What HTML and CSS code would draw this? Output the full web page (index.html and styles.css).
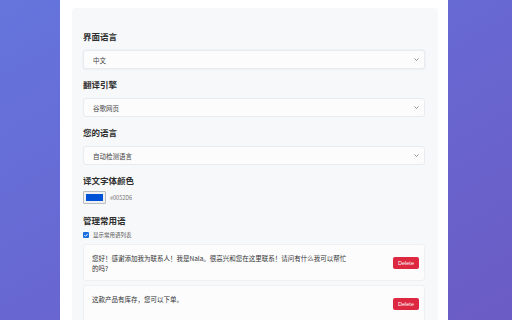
FILE: index.html
```html
<!DOCTYPE html>
<html lang="zh-CN">
<head>
    <meta charset="UTF-8">
    <meta name="viewport" content="width=device-width, initial-scale=1.0">
    <title>设置</title>
    <link rel="stylesheet" href="styles.css">
</head>
<body>
    <div class="page">
        <div class="panel">
            <!-- 界面语言 -->
            <label class="field-label">界面语言</label>
            <div class="select focus">
                <span>中文</span>
                <svg class="chevron" viewBox="0 0 10 6"><path d="M1 1l4 4 4-4" fill="none" stroke="#666" stroke-width="1.4"/></svg>
            </div>

            <label class="field-label">翻译引擎</label>
            <div class="select">
                <span>谷歌网页</span>
                <svg class="chevron" viewBox="0 0 10 6"><path d="M1 1l4 4 4-4" fill="none" stroke="#666" stroke-width="1.4"/></svg>
            </div>

            <label class="field-label">您的语言</label>
            <div class="select">
                <span>自动检测语言</span>
                <svg class="chevron" viewBox="0 0 10 6"><path d="M1 1l4 4 4-4" fill="none" stroke="#666" stroke-width="1.4"/></svg>
            </div>

            <!-- 颜色 -->
            <label class="field-label color-label">译文字体颜色</label>
            <div class="color-row">
                <div class="swatch"><div class="swatch-fill"></div></div>
                <span class="color-code">#0052D6</span>
            </div>

            <!-- 常用语 -->
            <label class="field-label phrase-label">管理常用语</label>
            <div class="check-row">
                <span class="checkbox">
                    <svg viewBox="0 0 10 10"><path d="M2.2 5.2l1.9 1.9 3.8-4" fill="none" stroke="#fff" stroke-width="1.6"/></svg>
                </span>
                <span>显示常用语列表</span>
            </div>

            <div class="phrase">
                <div class="phrase-text">您好！感谢添加我为联系人！我是Nala。很高兴和您在这里联系！请问有什么我可以帮忙的吗?</div>
                <button class="btn-delete">Delete</button>
            </div>
            <div class="phrase">
                <div class="phrase-text">这款产品有库存，您可以下单。</div>
                <button class="btn-delete">Delete</button>
            </div>
        </div>
    </div>
</body>
</html>
```

FILE: styles.css
```css
html, body {
    margin: 0;
    height: 100%;
}

body {
    background: linear-gradient(150deg, #6475dc 0%, #6869d3 45%, #6b5bc4 100%);
    font-family: "Noto Sans CJK SC", "Noto Sans", sans-serif;
    color: #333;
    overflow: hidden;
}

/* 白色主体 */
.page {
    width: 388px;
    min-height: 100%;
    margin-left: 60px;
    background: #fff;
    padding: 8px 10px 0 12px;
    box-sizing: border-box;
}

/* 灰色设置面板 */
.panel {
    background: #f7f8f9;
    border-radius: 4px;
    padding: 22px 13px 10px 11px;
    display: flex;
    flex-direction: column;
}

.field-label {
    font-size: 8.5px;
    font-weight: 700;
    line-height: 12px;
    margin-bottom: 8px;
    color: #2e2e2e;
}

.select {
    height: 19px;
    box-sizing: border-box;
    background: #fcfcfd;
    border: 1px solid #e9ecef;
    border-radius: 3px;
    padding: 0 5px 0 9px;
    display: flex;
    align-items: center;
    justify-content: space-between;
    font-size: 6.5px;
    color: #444;
    margin-bottom: 9px;
}

.select.focus {
    box-shadow: 0 0 0 1px #eef1f5, 0 1px 2px rgba(0, 0, 0, 0.05);
}

.chevron {
    width: 5px;
    height: 3px;
}

.color-label {
    margin-bottom: 5px;
}

.color-row {
    display: flex;
    align-items: center;
    gap: 4px;
    margin-bottom: 10px;
}

.swatch {
    width: 23px;
    height: 13px;
    box-sizing: border-box;
    border: 1px solid #b9bcc0;
    border-radius: 1px;
    padding: 2px;
    background: #f0f0f0;
}

.swatch-fill {
    width: 100%;
    height: 100%;
    background: #0052d6;
}

.color-code {
    font-size: 5.5px;
    color: #777;
}

.phrase-label {
    margin-bottom: 5px;
}

.check-row {
    display: flex;
    align-items: center;
    gap: 4px;
    font-size: 5.5px;
    color: #555;
    height: 8px;
    margin-bottom: 5px;
}

.checkbox {
    width: 6px;
    height: 6px;
    background: #1a6fe0;
    border-radius: 1px;
    display: flex;
}

.checkbox svg {
    width: 6px;
    height: 6px;
}

/* 常用语卡片 */
.phrase {
    background: #fcfcfd;
    border: 1px solid #eef0f2;
    border-radius: 3px;
    padding: 8px 5px 7px 8px;
    display: flex;
    align-items: center;
    gap: 44px;
    margin-bottom: 4px;
}

.phrase-text {
    flex: 1;
    min-height: 20px;
    font-size: 6.5px;
    line-height: 10px;
    color: #333;
    align-self: flex-start;
}

.btn-delete {
    width: 26px;
    height: 12px;
    padding: 0;
    border: none;
    border-radius: 2px;
    background: #dc2840;
    color: #fff;
    font-family: "Liberation Sans", Arial, sans-serif;
    font-size: 5.5px;
    cursor: pointer;
}
```
